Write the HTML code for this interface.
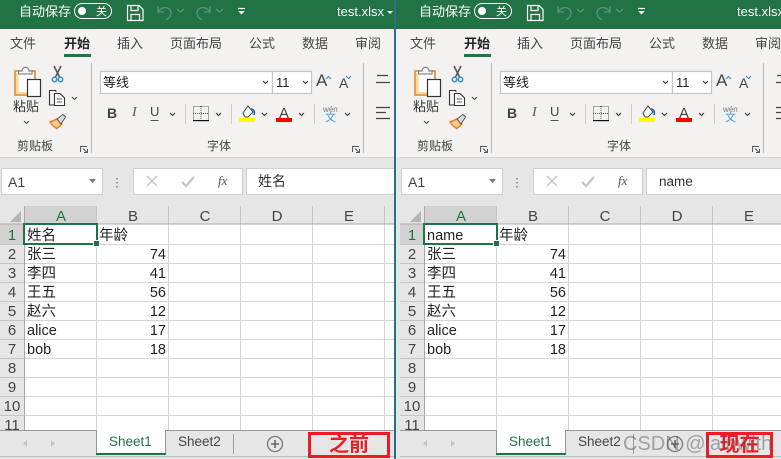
<!DOCTYPE html>
<html lang="zh"><head><meta charset="utf-8"><title>test.xlsx</title>
<style>
html,body{margin:0;padding:0;width:781px;height:459px;overflow:hidden;background:#e6e6e6}
body{position:relative;font-family:"Liberation Sans","Noto Sans CJK SC",sans-serif;color:#262626}
.p{position:absolute;top:0;height:459px;overflow:hidden}
.i{position:absolute;left:0;top:0;width:400px;height:459px}
.i svg{position:absolute;left:0;top:0}
.t{position:absolute;white-space:nowrap;line-height:18px;height:18px}
.w{color:#fff;font-size:13px;margin-top:2px}
.m{font-size:13px;color:#444;margin-top:1px}
.g{font-size:12px;color:#444}
.h{font-size:15px;color:#444;width:72px;text-align:center;top:208px}
.r{font-size:15px;color:#444;width:24px;text-align:center;left:0;margin-top:1px}
.c{font-size:14.5px;color:#222;left:27px;margin-top:1px}
.n{font-size:14.5px;color:#222;right:234px;text-align:right;margin-top:1px}
.s{font-size:13.5px;color:#444;top:433px}
.red{position:absolute;border:3px solid #ed1c24;box-sizing:border-box;color:#ed1c24;font-weight:bold;font-size:20px;line-height:20px;text-align:center;height:26px;top:432px}
.wm{position:absolute;left:623px;top:430px;font-size:20px;line-height:28px;color:rgba(90,90,90,.5);white-space:nowrap}
</style></head>
<body>
<svg width="0" height="0" style="position:absolute">
<defs>
<g id="gfx">
<rect x="0" y="0" width="400" height="29" fill="#217346"/>
<rect x="0" y="29" width="400" height="128" fill="#f3f2f1"/>
<rect x="0" y="157" width="400" height="49" fill="#e6e6e6"/>
<rect x="0" y="157" width="400" height="1" fill="#d5d5d5"/>
<rect x="0" y="206" width="400" height="224" fill="#fff"/>
<!-- title bar -->
<rect x="74.500" y="3.500" width="37" height="15" rx="7.500" fill="none" stroke="#fff"/>
<circle cx="82" cy="11" r="4" fill="#fff"/>
<g fill="none" stroke="#fff" stroke-width="1.200">
<path d="M127.500 5.500H139L143 9.500V20.500H127.500Z"/><path d="M131 5.500V10.500H138V5.500M131 20.500V14.500H139.500V20.500"/>
</g>
<g fill="none" stroke="#5f9279" stroke-width="1.300">
<path d="M158 6V12H164M158 12C161 6 171 6 171 13C171 16 169 18 166 20"/>
<path d="M177 9L180.500 12L184 9"/>
<path d="M210 6V12H204M210 12C207 6 197 6 197 13C197 16 199 18 202 20"/>
<path d="M216 9L219.500 12L223 9"/>
</g>
<path d="M238 8.500H245" stroke="#fff" stroke-width="1.200"/>
<path d="M238 11L241.500 14.500L245 11Z" fill="#fff"/>
<path d="M387 11H393L390 14Z" fill="#fff"/>
<!-- tab underline -->
<rect x="64" y="54" width="27" height="3" fill="#217346"/>
<!-- dividers -->
<rect x="91" y="63" width="1" height="90" fill="#b8b8b8"/>
<rect x="363" y="63" width="1" height="90" fill="#b8b8b8"/>
<!-- clipboard -->
<rect x="15" y="71" width="20" height="24" fill="#fff" stroke="#e6801e" stroke-width="1.500"/>
<path d="M16 92H27V94H16Z" fill="#f7d79d"/><path d="M16 73H18.500V92H16Z" fill="#f7d79d"/>
<path d="M18.500 74V71H22C22 66 29 66 29 71H32V74Z" fill="#f3f2f1" stroke="#777"/>
<rect x="27.500" y="79.500" width="13" height="17" fill="#fff" stroke="#333" stroke-width="1.200"/>
<path d="M24 121L26.500 123.500L29 121" fill="none" stroke="#444"/>
<!-- scissors -->
<path d="M54 66L59.500 77M61 66L55.500 77" stroke="#555" stroke-width="1.600" fill="none"/>
<circle cx="54.500" cy="79.500" r="2.200" fill="none" stroke="#2e8fd6" stroke-width="1.500"/>
<circle cx="60.500" cy="79.500" r="2.200" fill="none" stroke="#2e8fd6" stroke-width="1.500"/>
<!-- copy -->
<path d="M54 105H49.500V90.500H56M56 90.500V92" fill="none" stroke="#333" stroke-width="1.100"/>
<path d="M54.500 93.500H60L64.500 98V105.500H54.500Z" fill="#fff" stroke="#333" stroke-width="1.100"/>
<path d="M57 99H62M57 102H62" stroke="#555"/>
<path d="M72 97L74.500 99.500L77 97" fill="none" stroke="#444"/>
<!-- painter -->
<path d="M50 122L57 119L62 124L57 128.500C54 127 52 125 50 122Z" fill="#f9c98f" stroke="#e6801e" stroke-width="1.500"/>
<path d="M57 119L63 114.500L65.500 117L61 124Z" fill="#ddd" stroke="#555"/>
<!-- launchers -->
<g fill="none" stroke="#555"><path d="M80.500 152V146.500H87M83 148.500L87 152.500M84 152.500H87.500V149"/>
<path d="M352.500 152V146.500H359M355 148.500L359 152.500M356 152.500H359.500V149"/></g>
<!-- font boxes -->
<rect x="100.500" y="71.500" width="172" height="22" fill="#fff" stroke="#c6c6c6" stroke-width="1.200"/>
<rect x="272.500" y="71.500" width="39" height="22" fill="#fff" stroke="#c6c6c6" stroke-width="1.200"/>
<g fill="none" stroke="#333" stroke-width="1.100">
<path d="M263 81L265.500 83.500L268 81"/><path d="M303 81L305.500 83.500L308 81"/>
<path d="M170 113L172.500 115.500L175 113"/><path d="M216 113L218.500 115.500L221 113"/>
<path d="M262 113L264.500 115.500L267 113"/><path d="M299 113L301.500 115.500L304 113"/>
<path d="M345 113L347.500 115.500L350 113"/>
</g>
<path d="M326 79L328.500 76.500L331 79" fill="none" stroke="#2e8fd6" stroke-width="1.100"/>
<path d="M346 76L348.500 78.500L351 76" fill="none" stroke="#2e8fd6" stroke-width="1.100"/>
<path d="M150.500 120.500H158.500" stroke="#555"/>
<rect x="185" y="104" width="1" height="20" fill="#ccc"/>
<rect x="231" y="104" width="1" height="20" fill="#ccc"/>
<rect x="314" y="104" width="1" height="20" fill="#ccc"/>
<!-- borders -->
<rect x="193.500" y="106.500" width="15" height="14" fill="none" stroke="#555" stroke-dasharray="1 1"/>
<path d="M201 106V121M193 113.500H209" stroke="#555" stroke-dasharray="1 1"/>
<rect x="193" y="120" width="16" height="1.200" fill="#111"/>
<!-- fill -->
<path d="M243 113L248 106L253 112L248 117H245Z" fill="#fff" stroke="#444"/>
<path d="M251 109C254 109 255 112 254 115" fill="none" stroke="#1f6fb5" stroke-width="1.600"/>
<rect x="239" y="118" width="16" height="4" fill="#ffff00"/>
<rect x="276" y="118" width="16" height="4" fill="#ff0000"/>
<!-- align -->
<path d="M377 75.500H388M376 82.500H390" stroke="#444" stroke-width="1.200"/>
<path d="M376 107.500H390M376 112.500H386M376 118.500H390" stroke="#444" stroke-width="1.200"/>
<!-- formula bar -->
<rect x="1.500" y="168.500" width="101" height="26" fill="#fff" stroke="#d0d0d0"/>
<path d="M89 179H96L92.500 183Z" fill="#777"/>
<path d="M117 178V179.500M117 182V183.500M117 186V187.500" stroke="#999" stroke-width="2"/>
<rect x="133.500" y="168.500" width="109" height="26" fill="#fff" stroke="#d0d0d0"/>
<rect x="246.500" y="168.500" width="160" height="26" fill="#fff" stroke="#d0d0d0"/>
<path d="M147 176L157 186M157 176L147 186" stroke="#c4c4c4" stroke-width="1.500"/>
<path d="M182 182L186 186L194 177" fill="none" stroke="#c4c4c4" stroke-width="2.200"/>
<!-- headers -->
<rect x="0" y="206" width="400" height="18" fill="#e6e6e6"/>
<rect x="0" y="224" width="24" height="206" fill="#e6e6e6"/>
<rect x="25" y="206" width="72" height="18" fill="#d2d2d2"/>
<rect x="0" y="224" width="24" height="20" fill="#d2d2d2"/>
<path d="M10 222H21V211Z" fill="#b5b5b5"/>
<!-- grid -->
<g stroke="#d4d4d4" stroke-width="1" fill="none">
<path d="M96.500 224V430M168.500 224V430M240.500 224V430M312.500 224V430M384.500 224V430"/>
<path d="M25 244.500H400M25 263.500H400M25 282.500H400M25 301.500H400M25 320.500H400M25 339.500H400M25 358.500H400M25 377.500H400M25 396.500H400M25 415.500H400"/>
<path d="M0 244.500H24M0 263.500H24M0 282.500H24M0 301.500H24M0 320.500H24M0 339.500H24M0 358.500H24M0 377.500H24M0 396.500H24M0 415.500H24" stroke="#c4c4c4"/>
<path d="M96.500 206V224M168.500 206V224M240.500 206V224M312.500 206V224M384.500 206V224" stroke="#c4c4c4"/>
</g>
<rect x="24" y="206" width="1" height="224" fill="#a9a9a9"/>
<rect x="0" y="223.500" width="400" height="1" fill="#a9a9a9"/>
<!-- selection -->
<rect x="24" y="224" width="73" height="20" fill="none" stroke="#217346" stroke-width="2"/>
<rect x="93.500" y="240.500" width="6" height="6" fill="#217346" stroke="#fff" stroke-width="1"/>
<!-- sheet bar -->
<rect x="0" y="430" width="400" height="26" fill="#e6e6e6"/>
<rect x="0" y="430" width="400" height="1" fill="#9a9a9a"/>
<rect x="0" y="456" width="400" height="1" fill="#bdbdbd"/>
<rect x="96" y="430" width="70" height="25" fill="#fff"/>
<path d="M96.500 430V454M165.500 430V454" stroke="#9a9a9a"/>
<rect x="96" y="453" width="70" height="2" fill="#217346"/>
<rect x="233" y="434" width="1" height="20" fill="#9a9a9a"/>
<path d="M27 440L23 443.500L27 447Z" fill="#c4c4c4"/><path d="M51 440L55 443.500L51 447Z" fill="#c4c4c4"/>
<circle cx="275" cy="444" r="7.500" fill="none" stroke="#777" stroke-width="1.300"/>
<path d="M271 444H279M275 440V448" stroke="#666" stroke-width="1.600"/>
</g>
</defs>
</svg>

<!-- LEFT -->
<div class="p" style="left:0;width:394px"><div class="i">
<svg width="400" height="459"><use href="#gfx"/></svg>
<div class="t w" style="left:19px;top:1px">自动保存</div>
<div class="t" style="left:96px;top:3px;font-size:11px;color:#fff">关</div>
<div class="t w" style="left:337px;top:1px">test.xlsx</div>
<div class="t m" style="left:10px;top:34px">文件</div>
<div class="t m" style="left:64px;top:34px;font-weight:bold;color:#222">开始</div>
<div class="t m" style="left:117px;top:34px">插入</div>
<div class="t m" style="left:170px;top:34px">页面布局</div>
<div class="t m" style="left:249px;top:34px">公式</div>
<div class="t m" style="left:302px;top:34px">数据</div>
<div class="t m" style="left:355px;top:34px">审阅</div>
<div class="t m" style="left:13px;top:97px;color:#333">粘贴</div>
<div class="t g" style="left:17px;top:137px">剪贴板</div>
<div class="t g" style="left:207px;top:137px">字体</div>
<div class="t" style="left:103px;top:74px;font-size:13px;color:#222">等线</div>
<div class="t" style="left:276px;top:74px;font-size:13px;color:#222">11</div>
<div class="t" style="left:316px;top:72px;font-size:17px;color:#444">A</div>
<div class="t" style="left:339px;top:74px;font-size:14px;color:#444">A</div>
<div class="t" style="left:107px;top:104px;font-size:14px;font-weight:bold;color:#444">B</div>
<div class="t" style="left:132px;top:104px;font-size:14px;font-style:italic;font-family:'Liberation Serif',serif;color:#555">I</div>
<div class="t" style="left:150px;top:103px;font-size:13px;color:#444">U</div>
<div class="t" style="left:279px;top:105px;font-size:15px;color:#444">A</div>
<div class="t" style="left:323px;top:101px;font-size:8px;color:#777">wén</div>
<div class="t" style="left:325px;top:109px;font-size:11px;color:#3a96d8">文</div>
<div class="t" style="left:218px;top:172px;font-size:13px;font-style:italic;font-family:'Liberation Serif',serif;color:#555">fx</div>
<div class="t" style="left:8px;top:173px;font-size:14px;color:#444">A1</div>
<div class="t" style="left:258px;top:172px;font-size:14px;color:#333">姓名</div>
<div class="t h" style="left:25px;color:#217346">A</div><div class="t h" style="left:97px">B</div><div class="t h" style="left:169px">C</div><div class="t h" style="left:241px">D</div><div class="t h" style="left:313px">E</div>
<div class="t r" style="top:226px;color:#217346">1</div><div class="t r" style="top:245px">2</div><div class="t r" style="top:264px">3</div><div class="t r" style="top:283px">4</div><div class="t r" style="top:302px">5</div><div class="t r" style="top:321px">6</div><div class="t r" style="top:340px">7</div><div class="t r" style="top:359px">8</div><div class="t r" style="top:378px">9</div><div class="t r" style="top:397px">10</div><div class="t r" style="top:416px">11</div>
<div class="t c" style="top:226px">姓名</div><div class="t c" style="left:99px;top:226px">年龄</div>
<div class="t c" style="top:245px">张三</div><div class="t n" style="top:245px">74</div>
<div class="t c" style="top:264px">李四</div><div class="t n" style="top:264px">41</div>
<div class="t c" style="top:283px">王五</div><div class="t n" style="top:283px">56</div>
<div class="t c" style="top:302px">赵六</div><div class="t n" style="top:302px">12</div>
<div class="t c" style="top:321px">alice</div><div class="t n" style="top:321px">17</div>
<div class="t c" style="top:340px">bob</div><div class="t n" style="top:340px">18</div>
<div class="t s" style="left:109px;color:#217346">Sheet1</div>
<div class="t s" style="left:178px">Sheet2</div>
</div></div>

<!-- DIVIDER -->
<div style="position:absolute;left:394px;top:0;width:2px;height:459px;background:#2b7088"></div>

<!-- RIGHT -->
<div class="p" style="left:396px;width:385px"><div class="i" style="left:4px">
<svg width="400" height="459" style="overflow:visible"><rect x="-4" y="0" width="4" height="29" fill="#217346"/><rect x="-4" y="29" width="4" height="128" fill="#f3f2f1"/><use href="#gfx"/></svg>
<div class="t w" style="left:19px;top:1px">自动保存</div>
<div class="t" style="left:96px;top:3px;font-size:11px;color:#fff">关</div>
<div class="t w" style="left:337px;top:1px">test.xlsx</div>
<div class="t m" style="left:10px;top:34px">文件</div>
<div class="t m" style="left:64px;top:34px;font-weight:bold;color:#222">开始</div>
<div class="t m" style="left:117px;top:34px">插入</div>
<div class="t m" style="left:170px;top:34px">页面布局</div>
<div class="t m" style="left:249px;top:34px">公式</div>
<div class="t m" style="left:302px;top:34px">数据</div>
<div class="t m" style="left:355px;top:34px">审阅</div>
<div class="t m" style="left:13px;top:97px;color:#333">粘贴</div>
<div class="t g" style="left:17px;top:137px">剪贴板</div>
<div class="t g" style="left:207px;top:137px">字体</div>
<div class="t" style="left:103px;top:74px;font-size:13px;color:#222">等线</div>
<div class="t" style="left:276px;top:74px;font-size:13px;color:#222">11</div>
<div class="t" style="left:316px;top:72px;font-size:17px;color:#444">A</div>
<div class="t" style="left:339px;top:74px;font-size:14px;color:#444">A</div>
<div class="t" style="left:107px;top:104px;font-size:14px;font-weight:bold;color:#444">B</div>
<div class="t" style="left:132px;top:104px;font-size:14px;font-style:italic;font-family:'Liberation Serif',serif;color:#555">I</div>
<div class="t" style="left:150px;top:103px;font-size:13px;color:#444">U</div>
<div class="t" style="left:279px;top:105px;font-size:15px;color:#444">A</div>
<div class="t" style="left:323px;top:101px;font-size:8px;color:#777">wén</div>
<div class="t" style="left:325px;top:109px;font-size:11px;color:#3a96d8">文</div>
<div class="t" style="left:218px;top:172px;font-size:13px;font-style:italic;font-family:'Liberation Serif',serif;color:#555">fx</div>
<div class="t" style="left:8px;top:173px;font-size:14px;color:#444">A1</div>
<div class="t" style="left:259px;top:173px;font-size:13.500px;color:#333">name</div>
<div class="t h" style="left:25px;color:#217346">A</div><div class="t h" style="left:97px">B</div><div class="t h" style="left:169px">C</div><div class="t h" style="left:241px">D</div><div class="t h" style="left:313px">E</div>
<div class="t r" style="top:226px;color:#217346">1</div><div class="t r" style="top:245px">2</div><div class="t r" style="top:264px">3</div><div class="t r" style="top:283px">4</div><div class="t r" style="top:302px">5</div><div class="t r" style="top:321px">6</div><div class="t r" style="top:340px">7</div><div class="t r" style="top:359px">8</div><div class="t r" style="top:378px">9</div><div class="t r" style="top:397px">10</div><div class="t r" style="top:416px">11</div>
<div class="t c" style="top:226px">name</div><div class="t c" style="left:99px;top:226px">年龄</div>
<div class="t c" style="top:245px">张三</div><div class="t n" style="top:245px">74</div>
<div class="t c" style="top:264px">李四</div><div class="t n" style="top:264px">41</div>
<div class="t c" style="top:283px">王五</div><div class="t n" style="top:283px">56</div>
<div class="t c" style="top:302px">赵六</div><div class="t n" style="top:302px">12</div>
<div class="t c" style="top:321px">alice</div><div class="t n" style="top:321px">17</div>
<div class="t c" style="top:340px">bob</div><div class="t n" style="top:340px">18</div>
<div class="t s" style="left:109px;color:#217346">Sheet1</div>
<div class="t s" style="left:178px">Sheet2</div>
</div></div>

<div class="red" style="left:308px;width:82px">之前</div>
<div class="red" style="left:706px;width:67px">现在</div>
<div class="wm">CSDN @lainwith</div>
</body></html>
